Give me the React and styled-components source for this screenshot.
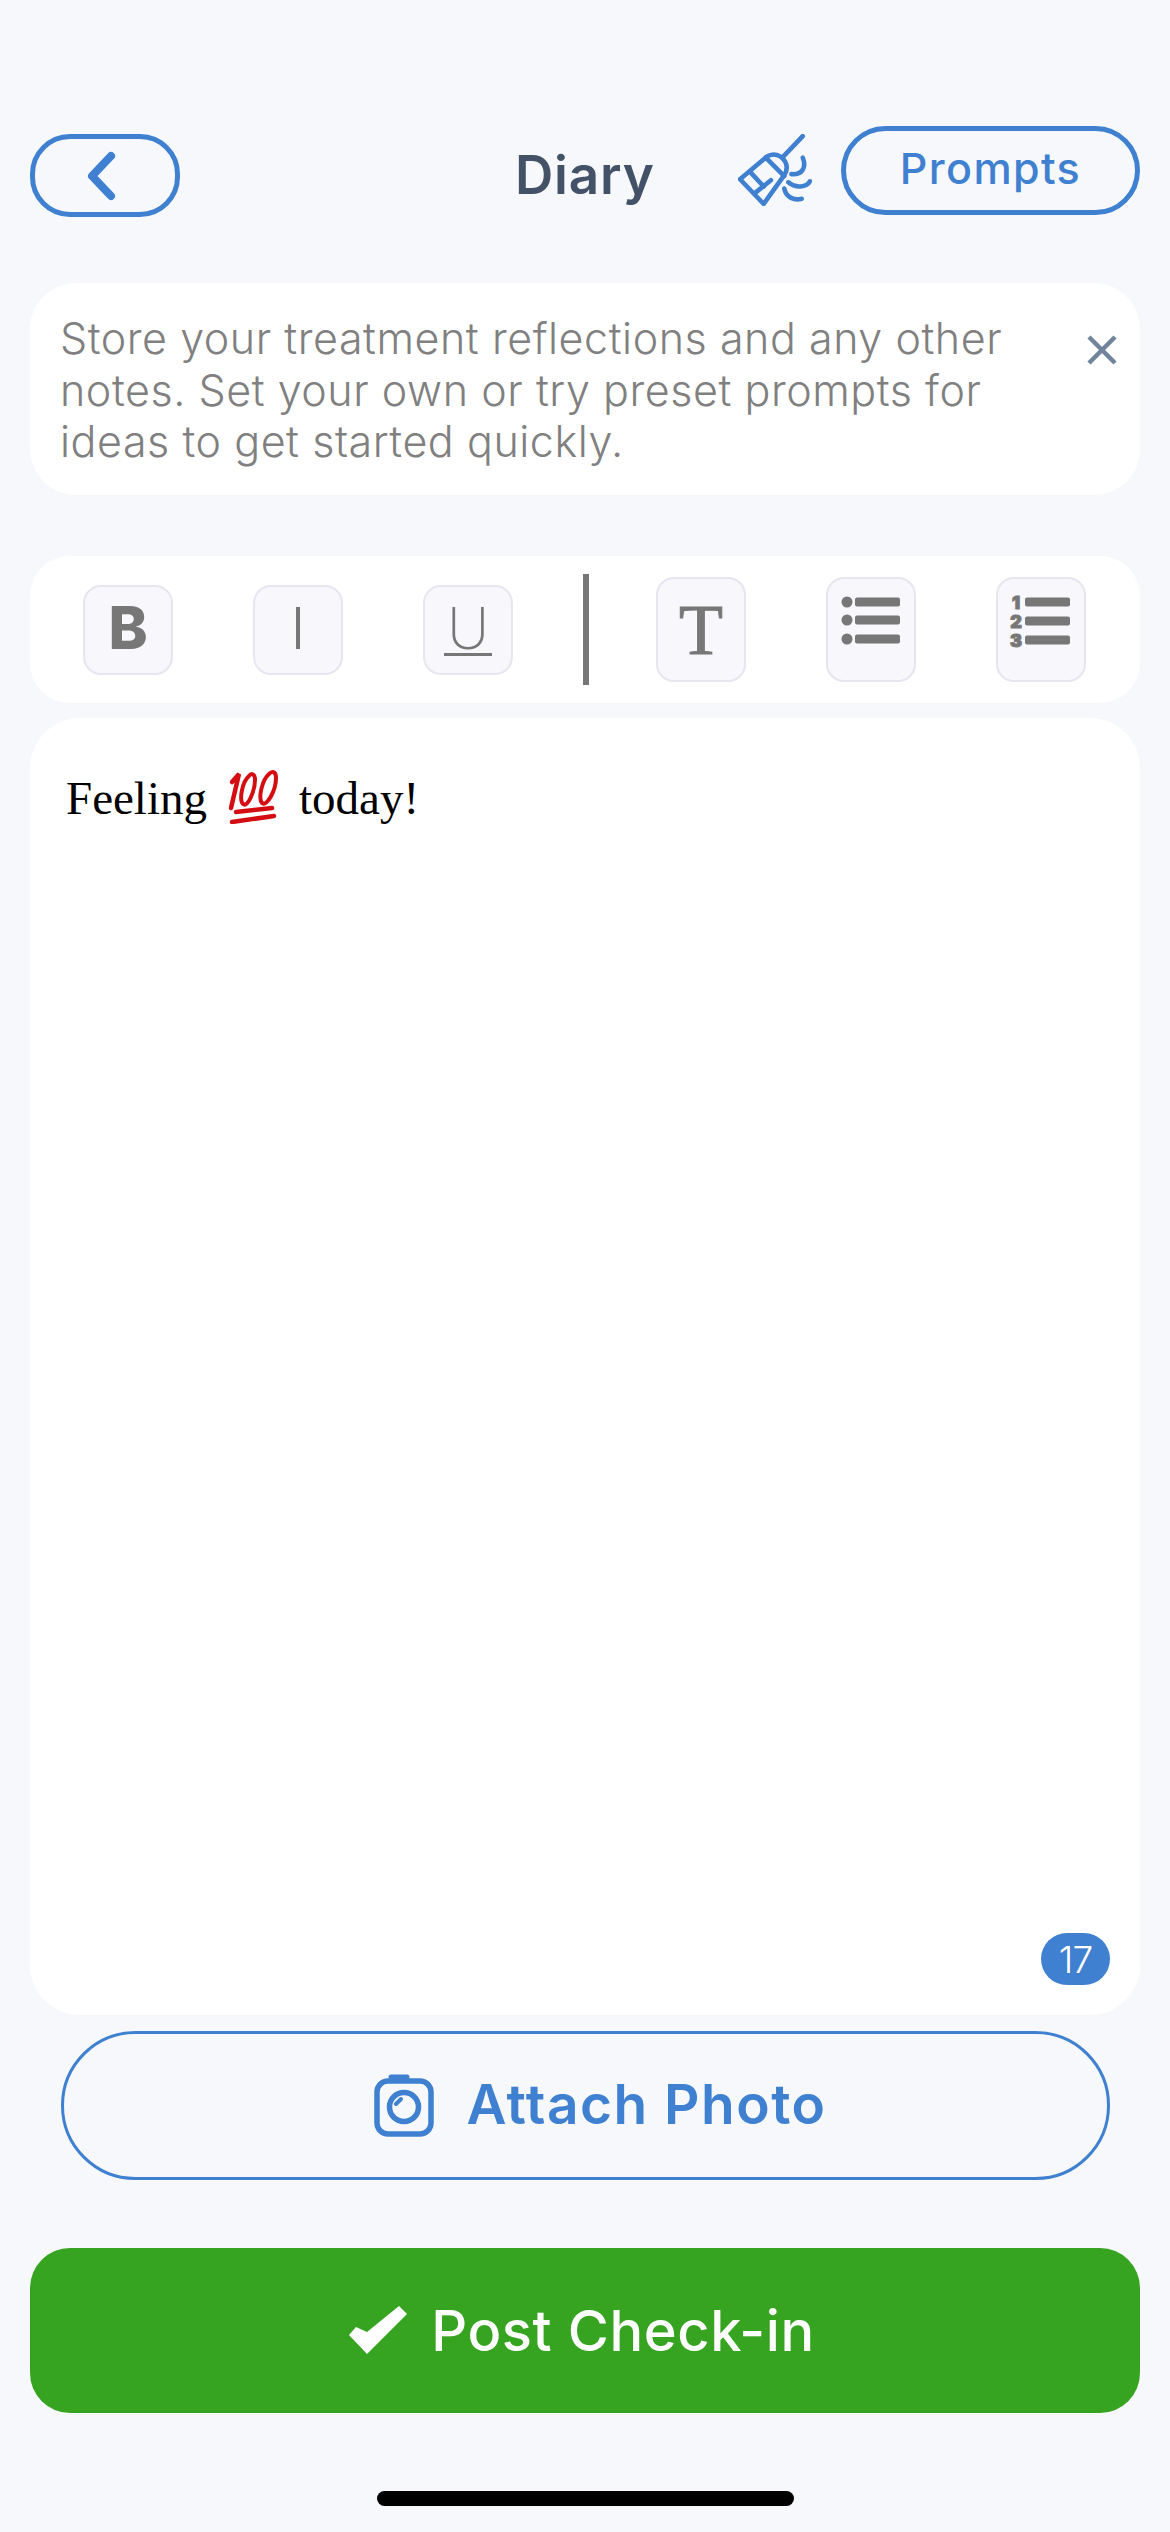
import React from 'react';
import styled, { createGlobalStyle } from 'styled-components';

const blue = '#3f80d0';
const grey = '#777777';

const GlobalStyle = createGlobalStyle`
  html, body {
    margin: 0;
    padding: 0;
    background: #f6f8fc;
  }
  body {
    font-family: Inter, "Open Sans", sans-serif;
  }
`;

const Page = styled.div`
  width: 1170px;
  height: 2532px;
  box-sizing: border-box;
  padding: 126px 30px 0;
  display: flex;
  flex-direction: column;
  background: #f6f8fc;
`;

const Header = styled.header`
  height: 91px;
  display: flex;
  align-items: flex-start;
`;

const BackButton = styled.button`
  width: 150px;
  height: 83px;
  margin-top: 8px;
  padding: 0;
  box-sizing: border-box;
  border: 5px solid ${blue};
  border-radius: 40px;
  background: transparent;
  display: flex;
  align-items: center;
  justify-content: center;
  svg {
    margin-right: 6px;
  }
`;

const Title = styled.h1`
  margin: 14px 0 0 335px;
  width: 140px;
  font-size: 53px;
  line-height: 70px;
  font-weight: 600;
  letter-spacing: 0.8px;
  color: #445268;
  white-space: nowrap;
`;

const Broom = styled.svg`
  width: 74px;
  height: 72px;
  margin: 8px 0 0 83px;
  flex: none;
`;

const PromptsButton = styled.button`
  margin-left: auto;
  width: 299px;
  height: 89px;
  box-sizing: border-box;
  border: 5px solid ${blue};
  border-radius: 45px;
  background: transparent;
  color: ${blue};
  font-family: inherit;
  font-size: 43px;
  font-weight: 500;
  letter-spacing: 1.4px;
  padding: 0 0 6px;
`;

const InfoCard = styled.section`
  margin-top: 66px;
  height: 212px;
  box-sizing: border-box;
  padding: 30px 0 0 30px;
  border-radius: 46px;
  background: #fff;
  display: flex;
  align-items: flex-start;
`;

const InfoText = styled.p`
  margin: 0;
  font-size: 43px;
  line-height: 51.5px;
  font-weight: 300;
  letter-spacing: 0.55px;
  color: #808080;
  white-space: nowrap;
`;

const CloseIcon = styled.svg`
  width: 30px;
  height: 30px;
  flex: none;
  margin: 22px 23px 0 auto;
`;

const Toolbar = styled.nav`
  margin-top: 61px;
  height: 147px;
  box-sizing: border-box;
  padding: 0 56px 0 53px;
  border-radius: 40px;
  background: #fff;
  display: flex;
  align-items: center;
`;

const ToolGroup = styled.div`
  display: flex;
  gap: 80px;
  align-items: center;
`;

const ToolButton = styled.button`
  width: 90px;
  height: ${(p) => (p.$tall ? 105 : 90)}px;
  padding: 0;
  box-sizing: border-box;
  border: 2.5px solid #e6e6f0;
  border-radius: 18px;
  background: #f7f7fc;
  color: ${grey};
  display: flex;
  align-items: center;
  justify-content: center;
  flex: none;
  font-family: inherit;
`;

const BoldMark = styled.span`
  font-size: 59px;
  line-height: 1;
  font-weight: 800;
  margin-bottom: 4px;
`;

const ItalicMark = styled.span`
  display: block;
  width: 4px;
  height: 42px;
  margin-bottom: 4px;
  background: ${grey};
`;

const UnderMark = styled.span`
  font-size: 58px;
  font-weight: 200;
  line-height: 44px;
  height: 47px;
  padding: 0 3px;
  border-bottom: 3px solid ${grey};
  margin-top: 2px;
`;

const SerifMark = styled.span`
  font-family: "Liberation Serif", serif;
  font-size: 72px;
  line-height: 1;
  font-weight: 400;
  -webkit-text-stroke: 1px ${grey};
`;

const ListIcon = styled.svg`
  width: 60px;
  height: 60px;
  margin-bottom: 18px;
  overflow: visible;
`;

const Divider = styled.div`
  width: 6px;
  height: 111px;
  margin: 0 67px 0 70px;
  background: ${grey};
  flex: none;
`;

const Editor = styled.section`
  margin-top: 15px;
  height: 1297px;
  box-sizing: border-box;
  padding: 53px 36px 0;
  border-radius: 50px;
  background: #fff;
  position: relative;
`;

const EditorText = styled.div`
  font-family: "Liberation Serif", "Times New Roman", serif;
  font-size: 47px;
  line-height: 54px;
  color: #000;
  display: flex;
  align-items: flex-start;
  white-space: pre;
`;

const Hundred = styled.svg`
  width: 54px;
  height: 56px;
  margin: -3px 17px 0 21px;
  flex: none;
`;

const CountBadge = styled.span`
  position: absolute;
  right: 30px;
  bottom: 30px;
  width: 69px;
  height: 52px;
  border-radius: 26px;
  background: ${blue};
  color: #fff;
  font-size: 37px;
  font-weight: 300;
  display: flex;
  align-items: center;
  justify-content: center;
  letter-spacing: -1px;
`;

const AttachButton = styled.button`
  margin: 16px 30px 0 31px;
  height: 149px;
  box-sizing: border-box;
  border: 3px solid ${blue};
  border-radius: 75px;
  background: transparent;
  color: ${blue};
  font-family: inherit;
  font-size: 55px;
  font-weight: 600;
  letter-spacing: 1.5px;
  display: flex;
  align-items: center;
  justify-content: center;
  gap: 32px;
  padding: 0 0 0 30px;
  span {
    margin-top: -4px;
  }
`;

const PostButton = styled.button`
  margin-top: 68px;
  height: 165px;
  box-sizing: border-box;
  border: none;
  border-radius: 40px;
  background: #36a420;
  color: #fff;
  font-family: inherit;
  font-size: 56px;
  font-weight: 500;
  letter-spacing: 0.6px;
  display: flex;
  align-items: center;
  justify-content: center;
  gap: 24px;
  padding: 0 6px 0 0;
`;

const HomeIndicator = styled.div`
  width: 417px;
  height: 15px;
  margin: 78px auto 0;
  border-radius: 8px;
  background: #000;
`;

const BulletList = () => (
  <ListIcon viewBox="0 0 60 60">
    {[11, 29, 48].map((y) => (
      <g key={y} fill={grey}>
        <circle cx="6" cy={y} r="5.5" />
        <rect x="14" y={y - 4.5} width="45" height="9" rx="2" />
      </g>
    ))}
  </ListIcon>
);

const NumberList = () => (
  <ListIcon viewBox="0 0 60 60">
    {[11, 30, 49].map((y, i) => (
      <g key={y} fill={grey}>
        <text
          x="5"
          y={y + 6.5}
          fontSize="18"
          fontWeight="900"
          textAnchor="middle"
          stroke={grey}
          strokeWidth="1"
          fontFamily="Inter, sans-serif"
        >
          {i + 1}
        </text>
        <rect x="14" y={y - 4.5} width="45" height="9" rx="2" />
      </g>
    ))}
  </ListIcon>
);

export default function App() {
  return (
    <>
      <GlobalStyle />
      <Page>
        <Header>
          <BackButton aria-label="Back">
            <svg width="32" height="50" viewBox="0 0 32 50" fill="none">
              <path
                d="M25 5 L6 25 L25 45"
                stroke={blue}
                strokeWidth="8"
                strokeLinecap="round"
                strokeLinejoin="round"
              />
            </svg>
          </BackButton>
          <Title>Diary</Title>
          <Broom
            viewBox="0 0 72 70"
            fill="none"
            stroke={blue}
            strokeWidth="4.5"
            strokeLinecap="round"
            strokeLinejoin="round"
          >
            <path d="M63 2 L44 22" />
            <path d="M2 44 L28 22 C34 18 42 20 46 27 C49 33 47 37 45 40 L25 68 Z" />
            <path d="M27 23 L45 41" />
            <path d="M12 37 L25 51" />
            <path d="M17 57 L32 45" />
            <path d="M63 23 C67 33 62 40 52 39" />
            <path d="M70 46 C67 52 56 53 49 47" />
            <path d="M62 63 C55 65 47 62 45 53" />
          </Broom>
          <PromptsButton>Prompts</PromptsButton>
        </Header>

        <InfoCard>
          <InfoText>
            Store your treatment reflections and any other
            <br />
            notes. Set your own or try preset prompts for
            <br />
            ideas to get started quickly.
          </InfoText>
          <CloseIcon viewBox="0 0 30 30" fill="none" stroke="#70849c" strokeWidth="4.5">
            <path d="M2 2 L28 28 M28 2 L2 28" />
          </CloseIcon>
        </InfoCard>

        <Toolbar>
          <ToolGroup>
            <ToolButton aria-label="Bold">
              <BoldMark>B</BoldMark>
            </ToolButton>
            <ToolButton aria-label="Italic">
              <ItalicMark />
            </ToolButton>
            <ToolButton aria-label="Underline">
              <UnderMark>U</UnderMark>
            </ToolButton>
          </ToolGroup>
          <Divider />
          <ToolGroup>
            <ToolButton $tall aria-label="Text size">
              <SerifMark>T</SerifMark>
            </ToolButton>
            <ToolButton $tall aria-label="Bullet list">
              <BulletList />
            </ToolButton>
            <ToolButton $tall aria-label="Numbered list">
              <NumberList />
            </ToolButton>
          </ToolGroup>
        </Toolbar>

        <Editor>
          <EditorText>
            Feeling
            <Hundred
              viewBox="0 0 54 56"
              fill="none"
              stroke="#d40d12"
              strokeWidth="4"
              strokeLinecap="round"
              aria-label="hundred points"
            >
              <path d="M4 14 L11 6 L3 40" strokeWidth="4.5" />
              <path d="M21 8 C14 14 11 32 15 36 C20 40 27 22 27 12 C27 5 23 5 21 8 Z" />
              <path d="M41 6 C34 12 30 30 34 35 C39 39 48 22 48 10 C48 3 44 3 41 6 Z" />
              <path d="M8 44 L44 40" strokeWidth="4.5" />
              <path d="M4 54 L46 48" strokeWidth="4.5" />
            </Hundred>
            today!
          </EditorText>
          <CountBadge>17</CountBadge>
        </Editor>

        <AttachButton>
          <svg width="60" height="63" viewBox="0 0 60 63" fill="none" stroke={blue}>
            <rect x="3" y="7" width="54" height="53" rx="11" strokeWidth="5.5" />
            <path d="M17 3 H33" strokeWidth="5" strokeLinecap="round" />
            <circle cx="30" cy="33" r="14.5" strokeWidth="5.5" />
            <path d="M22 30 L27 25" strokeWidth="4" strokeLinecap="round" />
          </svg>
          <span>Attach Photo</span>
        </AttachButton>

        <PostButton>
          <svg width="58" height="49" viewBox="0 0 58 49" fill="#fff">
            <path d="M0 29 L18 48 L58 8 L50 0 L18 26 L7 21 Z" />
          </svg>
          Post Check-in
        </PostButton>

        <HomeIndicator />
      </Page>
    </>
  );
}
